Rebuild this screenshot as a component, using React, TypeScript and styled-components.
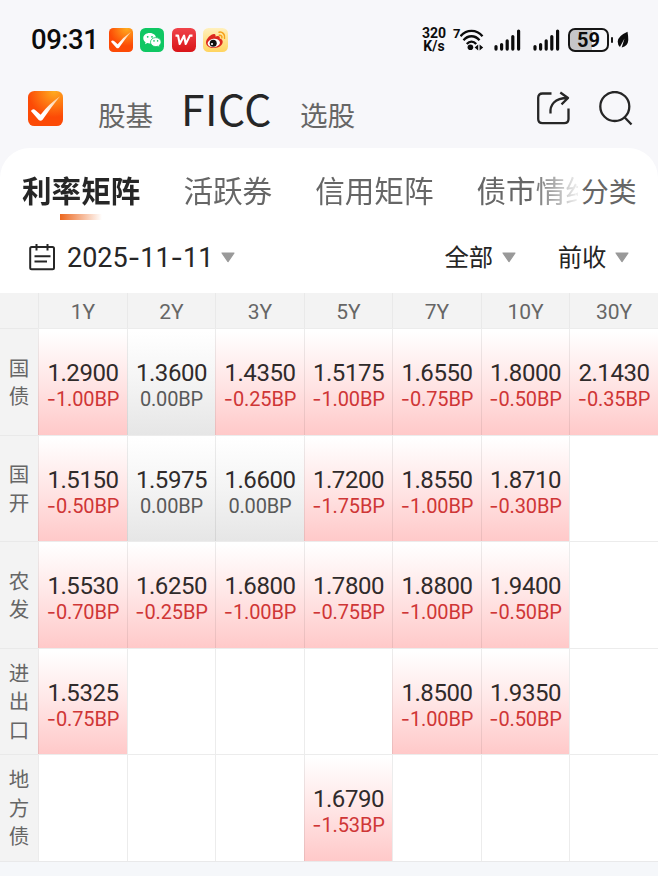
import React from 'react';
import styled, { createGlobalStyle, css } from 'styled-components';

const GlobalStyle = createGlobalStyle`
  * { box-sizing: border-box; }
  body {
    margin: 0;
    background: #fff;
    font-family: Roboto, "Noto Sans CJK SC", sans-serif;
    color: #262626;
    overflow: hidden;
  }
  svg { display: block; flex: none; }
`;

const Page = styled.div`
  width: 658px;
  height: 885px;
  overflow: hidden;
  background: #f7f7fa;
  display: flex;
  flex-direction: column;
`;

const StatusBar = styled.div`
  height: 80px;
  flex: none;
  display: flex;
  align-items: center;
  padding: 0 29px 0 31px;
`;

const Clock = styled.div`
  width: 77.5px;
  font-size: 27.5px;
  font-weight: 500;
  color: #0c0c0c;
  line-height: 30px;
  letter-spacing: -0.5px;
`;

const AppIcons = styled.div`
  display: flex;
  gap: 7.5px;
  flex: 1;
`;

const NetSpeed = styled.div`
  font-size: 14px;
  line-height: 13px;
  font-weight: 700;
  color: #0c0c0c;
  text-align: center;
  width: 26px;
  margin-right: 6px;
`;

const StatusIcons = styled.div`
  display: flex;
  align-items: center;
`;

const SignalSlot = styled.div<{ $gap: number }>`
  margin-left: ${p => p.$gap}px;
`;

const Battery = styled.div`
  width: 41px;
  height: 24px;
  margin-left: 8px;
  border: 2px solid #161616;
  border-radius: 7px;
  background: linear-gradient(90deg, #c6c6c8 59%, #f7f7fa 59%);
  font-size: 20px;
  line-height: 21.5px;
  font-weight: 700;
  text-align: center;
  color: #0c0c0c;
`;

const BatteryTip = styled.div`
  width: 2px;
  height: 6px;
  margin: 0 4px 0 2px;
  border-radius: 1px;
  background: #161616;
`;

const TopNav = styled.div`
  height: 68px;
  flex: none;
  display: flex;
  align-items: flex-start;
  padding: 11px 24px 0 28px;
`;

const NavItem = styled.div<{ $active?: boolean; $left: number }>`
  margin-left: ${p => p.$left}px;
  font-family: "Noto Sans CJK SC", sans-serif;
  white-space: nowrap;
  ${p => p.$active ? css`
    font-size: 42.5px;
    line-height: 34px;
    color: #262626;
    width: 89px;
    letter-spacing: 0.5px;
  ` : css`
    font-size: 27.6px;
    line-height: 46px;
    color: #666;
    width: 56px;
  `}
`;

const NavActions = styled.div`
  margin-left: auto;
  display: flex;
  gap: 28px;
`;

const Card = styled.div`
  flex: 1;
  display: flex;
  flex-direction: column;
  background: #fff;
  border-radius: 30px 30px 0 0;
`;

const TabBar = styled.div`
  height: 74px;
  display: flex;
  padding: 22px 21px 0 22px;
`;

const TabScroller = styled.div`
  width: 556px;
  display: flex;
  gap: 43px;
  overflow: hidden;
  mask-image: linear-gradient(90deg, #000 508px, rgba(0, 0, 0, 0.1) 556px);
`;

const Tab = styled.div<{ $active?: boolean }>`
  flex: none;
  display: flex;
  flex-direction: column;
  align-items: center;
  font-size: 29.6px;
  line-height: 45px;
  white-space: nowrap;
  font-weight: ${p => (p.$active ? 700 : 400)};
  color: ${p => (p.$active ? '#262626' : '#666')};
`;

const TabMark = styled.div`
  width: 42px;
  height: 6px;
  margin-top: -1px;
  background: linear-gradient(90deg, #ec671f, #fff);
`;

const Category = styled.div`
  margin-left: 3px;
  font-size: 27.8px;
  line-height: 45px;
  color: #666;
  white-space: nowrap;
`;

const FilterBar = styled.div`
  height: 71px;
  display: flex;
  align-items: center;
  padding: 0 29px 0 28px;
`;

const DateText = styled.div`
  margin: 0 8px 0 12px;
  width: 146px;
  font-size: 27px;
  line-height: 36px;
  white-space: nowrap;
`;

const Dash = styled.span<{ $w: number }>`
  display: inline-block;
  width: ${p => p.$w}px;
  font-family: Inter, sans-serif;
  text-align: center;
  letter-spacing: 0;
`;

const Choices = styled.div`
  margin-left: auto;
  display: flex;
  gap: 42px;
`;

const Choice = styled.div`
  display: flex;
  align-items: center;
  gap: 8.5px;
  font-size: 24.4px;
  line-height: 36px;
`;

const line = 'rgba(0, 0, 0, 0.075)';

const Matrix = styled.div`
  display: grid;
  grid-template-columns: 38px 89px 88px 89px 88px 89px 88px 89px;
  grid-template-rows: 35px 107px 106px 107px 106px 107px;
`;

const HeadCell = styled.div`
  background: #f3f3f3;
  border-left: 1px solid #e9e9e9;
  display: flex;
  align-items: center;
  justify-content: center;
  padding-top: 3px;
  font-size: 21px;
  color: #666;
  &:first-child { border-left: 0; }
`;

const RowLabel = styled.div`
  background: #f3f3f3;
  border-top: 1px solid #e9e9e9;
  display: flex;
  flex-direction: column;
  align-items: center;
  justify-content: center;
  padding-top: 2px;
  font-size: 20.5px;
  line-height: 28.4px;
  color: #666;
`;

const tones = {
  down: 'linear-gradient(180deg, #fff 3%, #ffe6e6 50%, #ffc9c9 100%)',
  flat: 'linear-gradient(180deg, #fff 3%, #f4f4f4 50%, #e6e6e6 100%)',
  none: '#fff',
};

type Tone = keyof typeof tones;

const Cell = styled.div<{ $tone: Tone }>`
  border-left: 1px solid ${line};
  border-top: 1px solid ${line};
  background: ${p => tones[p.$tone]};
  background-origin: border-box;
  display: flex;
  flex-direction: column;
  align-items: center;
  justify-content: center;
  padding-top: 8px;
  white-space: nowrap;
`;

const Rate = styled.div`
  height: 26px;
  font-size: 24px;
  line-height: 26px;
  letter-spacing: -0.45px;
  color: #302b2b;
`;

const Change = styled.div<{ $tone: Tone }>`
  height: 26px;
  font-size: 20px;
  line-height: 26px;
  letter-spacing: -0.15px;
  color: ${p => (p.$tone === 'down' ? '#cf3636' : '#595959')};
`;

const Footer = styled.div`
  height: 15px;
  background: #f5f7fa;
  border-top: 1px solid #e9e9ea;
`;

const Caret = () => (
  <svg width="14" height="11" viewBox="0 0 14 11">
    <path d="M1 1h12L7 9.6z" fill="#999" stroke="#999" strokeWidth="1.2" strokeLinejoin="round" />
  </svg>
);

const CheckLogo = ({ size }: { size: number }) => (
  <svg width={size} height={size} viewBox="0 0 36 36">
    <defs>
      <radialGradient id={`fire${size}`} cx="0.75" cy="0" r="0.75">
        <stop offset="0" stopColor="#ffad1f" />
        <stop offset="1" stopColor="#fc4a06" />
      </radialGradient>
      <linearGradient id={`tick${size}`} x1="0" y1="1" x2="1" y2="0">
        <stop offset="0.4" stopColor="#fff" />
        <stop offset="1" stopColor="#ffc48a" />
      </linearGradient>
    </defs>
    <rect width="36" height="36" rx="6.5" fill={`url(#fire${size})`} />
    <path d="M3 20.5Q5 17.5 8 20l5 4.3Q21.5 13.5 33 5.5 24 16.5 15 29.5q-2 2-4 .2Z" fill={`url(#tick${size})`} />
  </svg>
);

const ChatLogo = () => (
  <svg width="24" height="24" viewBox="0 0 24 24">
    <rect width="24" height="24" rx="5.5" fill="#0fc763" />
    <path d="M9.7 5C5.9 5 3.3 7.2 3.3 10.2c0 1.7.9 3.1 2.3 4.1L5 16.3l2.3-1.2c.8.2 1.6.3 2.4.3 3.8 0 6.4-2.3 6.4-5.2S13.5 5 9.7 5z" fill="#fff" />
    <path d="M15.8 9.6c-3 0-5.3 2-5.3 4.5s2.3 4.5 5.3 4.5c.7 0 1.3-.1 1.9-.3l1.9 1-.5-1.7c1.2-.8 2-2.1 2-3.5 0-2.5-2.3-4.5-5.3-4.5z" fill="#fff" stroke="#0fc763" strokeWidth=".8" />
    <g fill="#0fc763"><circle cx="7.7" cy="8.8" r=".9" /><circle cx="12" cy="8.8" r=".9" /><circle cx="14" cy="12.9" r=".8" /><circle cx="17.6" cy="12.9" r=".8" /></g>
  </svg>
);

const WriterLogo = () => (
  <svg width="24" height="24" viewBox="0 0 24 24">
    <defs>
      <linearGradient id="writer" x1="0" y1="0" x2="0" y2="1">
        <stop offset="0" stopColor="#f0434a" />
        <stop offset="1" stopColor="#d91418" />
      </linearGradient>
    </defs>
    <rect width="24" height="24" rx="5.5" fill="url(#writer)" />
    <path d="M3.5 7.6h2.6l1.6 8.4 4.4-8.4 1.6 8.4 4.2-8.400h2.600" fill="none" stroke="#fff" strokeWidth="2.1" strokeLinejoin="round" />
  </svg>
);

const EyeLogo = () => (
  <svg width="25" height="24" viewBox="0 0 25 24">
    <defs>
      <linearGradient id="eye" x1="0" y1="0" x2="0" y2="1">
        <stop offset="0" stopColor="#fff0bd" />
        <stop offset="1" stopColor="#ffd45f" />
      </linearGradient>
    </defs>
    <rect width="25" height="24" rx="5.5" fill="url(#eye)" />
    <path d="M3 14.5c0-4 5.5-9 8.5-8.500 1.200.3 1.200 1.500.9 2.500 2.200-.9 5-.9 4.300 2 2.100.6 3 1.700 3 3.300 0 3.500-4 6.200-8.700 6.200-4.500 0-8-2-8-5.500z" fill="#dc281e" />
    <ellipse cx="10.8" cy="15" rx="6.2" ry="4.2" transform="rotate(-8 10.8 15)" fill="#fff" />
    <circle cx="10.2" cy="15.2" r="3.5" fill="#111" />
    <circle cx="9" cy="16" r="1.1" fill="#fff" />
    <path d="M16 4.2c3.5-.7 6.5 2.5 5.500 6M16.300 7.200c1.700-.3 3 1 2.500 2.700" fill="none" stroke="#f6a11b" strokeWidth="1.5" strokeLinecap="round" />
  </svg>
);

const WifiMark = styled.div`
  display: flex;
  align-items: flex-start;
  width: 31px;
  font-size: 13px;
  line-height: 11px;
  font-weight: 700;
  color: #0c0c0c;
`;

const Wifi = () => (
  <WifiMark>
    7
    <svg width="24" height="24" viewBox="0 0 24 24">
      <g fill="none" stroke="#0c0c0c" strokeWidth="2.3">
        <path d="M.5 8.200C6.500 1 16.500 1 22.500 8.200" />
        <path d="M3.500 12.200c4.500-5.300 11.500-5.300 16 0" />
        <path d="M6.800 16c2.700-3.200 6.700-3.200 9.400 0" />
      </g>
      <circle cx="10.4" cy="19.3" r="2.8" fill="#0c0c0c" />
      <path d="M18.2 16.500v6L14.600 19.500zM19.600 16.500v6L23.200 19.500z" fill="#0c0c0c" />
    </svg>
  </WifiMark>
);

const Signal = () => (
  <svg width="27" height="22" viewBox="0 0 27 22">
    <g stroke="#0c0c0c" strokeWidth="3.2" strokeLinecap="round">
      <path d="M2 17.500v2.600M7.600 15.500v4.600M13.200 11.800v8.300M18.800 7.500v12.600M24.600 2v18.100" />
    </g>
  </svg>
);

const Leaf = () => (
  <svg width="12" height="18" viewBox="0 0 12 18">
    <path d="M10.5.7Q.8 5 .7 10.500q0 3.500 2.200 5.500L7.500 7.500 4.700 16.600Q11 15 11.300 9q0-4-.8-8.300z" fill="#0c0c0c" />
  </svg>
);

const ShareIcon = () => (
  <svg width="35" height="34" viewBox="0 0 35 34" fill="none" stroke="#262626" strokeWidth="2.3">
    <path d="M15.500 2.500H6.500Q2.200 2.500 2.200 6.800V28Q2.200 32.200 6.500 32.200H28.200Q32.500 32.200 32.500 28V17.500" />
    <path d="M14.500 22.500c-.8-8.500 4.200-15.500 17-15.500M24.300 1.500 32 7 25.500 13.300" strokeLinejoin="round" />
  </svg>
);

const SearchIcon = () => (
  <svg width="35" height="36" viewBox="0 0 35 36" fill="none" stroke="#262626" strokeWidth="2.3">
    <circle cx="15.8" cy="15.5" r="14.5" />
    <path d="M25.500 26.300l7 7.200" />
  </svg>
);

const CalendarIcon = () => (
  <svg width="27" height="30" viewBox="0 0 27 30" fill="none" stroke="#262626" strokeWidth="2">
    <rect x="2.2" y="4" width="23.8" height="22.2" rx="1.5" />
    <path d="M8.500 1v6.500M19.500 1v6.500M6.500 13.200h16M6.500 18.400h12.500" />
  </svg>
);

const terms = ['1Y', '2Y', '3Y', '5Y', '7Y', '10Y', '30Y'];

type Quote = [string, string] | null;

const rows: { name: string; quotes: Quote[] }[] = [
  { name: '国债', quotes: [['1.2900', '-1.00BP'], ['1.3600', '0.00BP'], ['1.4350', '-0.25BP'], ['1.5175', '-1.00BP'], ['1.6550', '-0.75BP'], ['1.8000', '-0.50BP'], ['2.1430', '-0.35BP']] },
  { name: '国开', quotes: [['1.5150', '-0.50BP'], ['1.5975', '0.00BP'], ['1.6600', '0.00BP'], ['1.7200', '-1.75BP'], ['1.8550', '-1.00BP'], ['1.8710', '-0.30BP'], null] },
  { name: '农发', quotes: [['1.5530', '-0.70BP'], ['1.6250', '-0.25BP'], ['1.6800', '-1.00BP'], ['1.7800', '-0.75BP'], ['1.8800', '-1.00BP'], ['1.9400', '-0.50BP'], null] },
  { name: '进出口', quotes: [['1.5325', '-0.75BP'], null, null, null, ['1.8500', '-1.00BP'], ['1.9350', '-0.50BP'], null] },
  { name: '地方债', quotes: [null, null, null, ['1.6790', '-1.53BP'], null, null, null] },
];

const withDashes = (text: string, width: number) =>
  text.split(/(-)/).map((part, i) => (part === '-' ? <Dash key={i} $w={width}>-</Dash> : part));

const toneOf = (quote: Quote): Tone => {
  if (!quote) return 'none';
  return quote[1].startsWith('-') ? 'down' : 'flat';
};

export default function App() {
  return (
    <Page>
      <GlobalStyle />
      <StatusBar>
        <Clock>09:31</Clock>
        <AppIcons>
          <CheckLogo size={24} />
          <ChatLogo />
          <WriterLogo />
          <EyeLogo />
        </AppIcons>
        <StatusIcons>
          <NetSpeed>320<br />K/s</NetSpeed>
          <Wifi />
          <SignalSlot $gap={10}><Signal /></SignalSlot>
          <SignalSlot $gap={12}><Signal /></SignalSlot>
          <Battery>59</Battery>
          <BatteryTip />
          <Leaf />
        </StatusIcons>
      </StatusBar>
      <TopNav>
        <CheckLogo size={35} />
        <NavItem $left={35}>股基</NavItem>
        <NavItem $active $left={27}>FICC</NavItem>
        <NavItem $left={30}>选股</NavItem>
        <NavActions>
          <ShareIcon />
          <SearchIcon />
        </NavActions>
      </TopNav>
      <Card>
        <TabBar>
          <TabScroller>
            <Tab $active>利率矩阵<TabMark /></Tab>
            <Tab>活跃券</Tab>
            <Tab>信用矩阵</Tab>
            <Tab>债市情绪</Tab>
          </TabScroller>
          <Category>分类</Category>
        </TabBar>
        <FilterBar>
          <CalendarIcon />
          <DateText>{withDashes('2025-11-11', 12.5)}</DateText>
          <Caret />
          <Choices>
            <Choice>全部<Caret /></Choice>
            <Choice>前收<Caret /></Choice>
          </Choices>
        </FilterBar>
        <Matrix>
          <HeadCell />
          {terms.map(t => <HeadCell key={t}>{t}</HeadCell>)}
          {rows.map(row => (
            <React.Fragment key={row.name}>
              <RowLabel>{[...row.name].map(ch => <span key={ch}>{ch}</span>)}</RowLabel>
              {row.quotes.map((quote, i) => {
                const tone = toneOf(quote);
                return (
                  <Cell key={terms[i]} $tone={tone}>
                    {quote && <Rate>{quote[0]}</Rate>}
                    {quote && <Change $tone={tone}>{withDashes(quote[1], 9.2)}</Change>}
                  </Cell>
                );
              })}
            </React.Fragment>
          ))}
        </Matrix>
        <Footer />
      </Card>
    </Page>
  );
}
